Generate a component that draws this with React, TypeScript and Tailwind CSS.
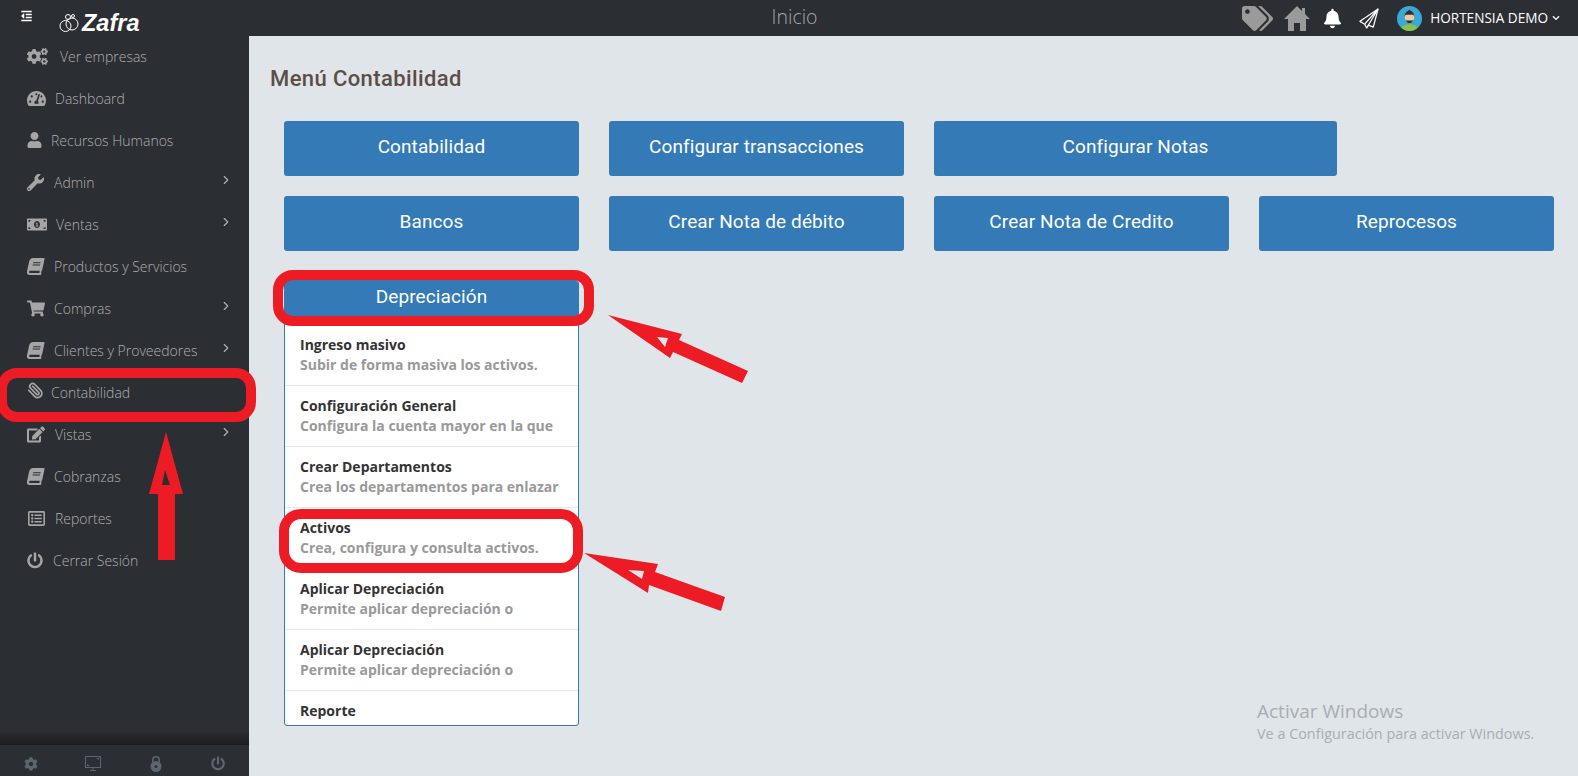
import type { ReactNode } from "react"
import {
  FaBell,
  FaBook,
  FaChevronDown,
  FaCog,
  FaCogs,
  FaEdit,
  FaMoneyBillAlt,
  FaOutdent,
  FaPowerOff,
  FaRegListAlt,
  FaShoppingCart,
  FaTachometerAlt,
  FaTags,
  FaUser,
  FaWrench,
} from "react-icons/fa"
import { FiChevronRight } from "react-icons/fi"
import { Paperclip } from "lucide-react"

type NavItem = { label: string; icon: ReactNode; box: string; arrow?: boolean }

const navItems: NavItem[] = [
  { label: "Ver empresas", icon: <FaCogs className="w-[21px] h-[21px]" />, box: "w-[33px]" },
  { label: "Dashboard", icon: <FaTachometerAlt className="w-[19px] h-[19px]" />, box: "w-[28px]" },
  { label: "Recursos Humanos", icon: <FaUser className="w-[15px] h-[16px]" />, box: "w-[24px]" },
  { label: "Admin", icon: <FaWrench className="w-[17px] h-[17px]" />, box: "w-[27px]", arrow: true },
  { label: "Ventas", icon: <FaMoneyBillAlt className="w-[20px] h-[17px]" />, box: "w-[29px]", arrow: true },
  { label: "Productos y Servicios", icon: <FaBook className="w-[17px] h-[17px] -skew-x-12" />, box: "w-[27px]" },
  { label: "Compras", icon: <FaShoppingCart className="w-[18px] h-[17px]" />, box: "w-[27px]", arrow: true },
  { label: "Clientes y Proveedores", icon: <FaBook className="w-[17px] h-[17px] -skew-x-12" />, box: "w-[27px]", arrow: true },
  { label: "Contabilidad", icon: <Paperclip className="w-[17px] h-[17px] -scale-x-100 -mt-[3px]" strokeWidth={2.4} />, box: "w-[24px]" },
  { label: "Vistas", icon: <FaEdit className="w-[18px] h-[17px]" />, box: "w-[28px]", arrow: true },
  { label: "Cobranzas", icon: <FaBook className="w-[17px] h-[17px] -skew-x-12" />, box: "w-[27px]" },
  { label: "Reportes", icon: <FaRegListAlt className="w-[19px] h-[17px]" />, box: "w-[28px]" },
  { label: "Cerrar Sesión", icon: <FaPowerOff className="w-[16px] h-[17px]" />, box: "w-[26px]" },
]

const depreciacion = [
  { title: "Ingreso masivo", text: "Subir de forma masiva los activos." },
  { title: "Configuración General", text: "Configura la cuenta mayor en la que" },
  { title: "Crear Departamentos", text: "Crea los departamentos para enlazar" },
  { title: "Activos", text: "Crea, configura y consulta activos." },
  { title: "Aplicar Depreciación", text: "Permite aplicar depreciación o" },
  { title: "Aplicar Depreciación", text: "Permite aplicar depreciación o" },
  { title: "Reporte", text: "" },
]

function MenuButton({ label, wide }: { label: string; wide?: boolean }) {
  return (
    <button className={`h-[55px] pb-[2px] ${wide ? "w-[403px]" : "w-[295px]"} rounded-[3px] bg-[#337ab7] text-white text-[19px] tracking-[0.1px] font-['Roboto',sans-serif]`}>
      {label}
    </button>
  )
}

function Avatar() {
  return (
    <svg viewBox="0 0 26 26" className="w-[25px] h-[25px]">
      <clipPath id="av"><circle cx="13" cy="13" r="13" /></clipPath>
      <g clipPath="url(#av)">
        <rect width="26" height="26" fill="#3aa9d8" />
        <path d="M4 26c0-5 4-7 9-7s9 2 9 7z" fill="#8bc34a" />
        <circle cx="13" cy="12" r="5" fill="#f2c9a1" />
        <path d="M8 11c0-4 2-5 5-7 3 2 5 3 5 7l-1-2H9z" fill="#333" />
        <path d="M9 14c1 5 7 5 8 0l-1 1h-6z" fill="#333" />
      </g>
    </svg>
  )
}

function HomeIcon() {
  return (
    <svg viewBox="0 0 26 25" className="ml-[11px] w-[26px] h-[25px] text-[#9a9a9a]" fill="currentColor">
      <path d="M13 0L0 13h4v12h6v-8h6v8h6V13h4l-5-5V2h-3v3z" />
    </svg>
  )
}

function PlaneIcon() {
  return (
    <svg viewBox="0 0 21 22" className="ml-[18px] w-[20px] h-[21px] text-white" fill="none" stroke="currentColor" strokeWidth="1.300" strokeLinejoin="round">
      <path d="M20 1L1 14l5 3 2 4 2-3 5 2z" />
      <path d="M20 1L6 17M20 1L8 21" />
    </svg>
  )
}

function Logo() {
  return (
    <div className="flex items-center">
      <svg viewBox="0 0 20 20" className="w-[20px] h-[20px] text-white" fill="none" stroke="currentColor" strokeWidth="1">
        <circle cx="6.500" cy="13" r="5.500" />
        <circle cx="13" cy="11" r="6" />
        <circle cx="9" cy="4" r="2.500" />
        <circle cx="14" cy="3" r="1.500" />
      </svg>
      <span className="ml-[3px] text-white text-[23.5px] leading-[24px] font-bold italic font-['Liberation_Sans',sans-serif]">Zafra</span>
    </div>
  )
}

// annotation shapes drawn on top of the screenshot
function Annotations() {
  return (
    <div className="absolute inset-0 pointer-events-none">
      <div className="absolute left-[-3px] top-[368px] w-[259px] h-[54px] rounded-[20px] border-[10px] border-[#ed1c24]" />
      <div className="absolute left-[273px] top-[270px] w-[321px] h-[56px] rounded-[20px] border-[10px] border-[#ed1c24]" />
      <div className="absolute left-[279px] top-[509px] w-[304px] h-[64px] rounded-[22px] border-[10px] border-[#ed1c24]" />
      <svg className="absolute inset-0 w-full h-full" viewBox="0 0 1578 776">
        <path fill="#ed1c24" fillRule="evenodd" d="M166 432L149 494H158V560H175V494H183ZM165 470L162 485H170Z" />
        <path fill="#ed1c24" fillRule="evenodd" d="M608 315L682 334L679 340L748 371L742 383L673 352L670 358ZM657 337L668 338L665 347Z" />
        <path fill="#ed1c24" fillRule="evenodd" d="M584 553L658 564L655 572L725 597L721 611L649 585L648 593ZM628 570L644 571L642 579Z" />
      </svg>
    </div>
  )
}

export default function App() {
  return (
    <div className="relative h-screen w-full overflow-hidden flex flex-col bg-[#e0e5e9] font-['Open_Sans',sans-serif]">
      {/* Top bar */}
      <header className="h-9 shrink-0 bg-[#2b2e33] flex items-center">
        <div className="w-[249px] shrink-0 flex items-center pl-[19px]">
          <FaOutdent className="w-[15px] h-[12px] text-white mb-[5px]" />
          <div className="ml-[25px] mt-[9px]">
            <Logo />
          </div>
        </div>
        <div className="flex-1 pl-[98px] pb-[3px] text-center text-[19.5px] font-light text-[#a3a6a9]">Inicio</div>
        <div className="flex items-center pr-[18px]">
          <FaTags className="w-[31px] h-[25px] text-[#9a9a9a]" />
          <HomeIcon />
          <FaBell className="ml-[14px] w-[17px] h-[21px] text-white" />
          <PlaneIcon />
          <div className="ml-[18px]"><Avatar /></div>
          <span className="ml-[8px] text-[13.6px] text-white">HORTENSIA DEMO</span>
          <FaChevronDown className="ml-[4px] w-[8px] h-[8px] text-white" />
        </div>
      </header>

      <div className="flex-1 flex min-h-0">
        {/* Sidebar */}
        <aside className="w-[249px] shrink-0 bg-[#2b2e33] flex flex-col">
          <nav className="flex-1 -mt-px pl-[27px] pr-[16px]">
            {navItems.map((item) => (
              <div key={item.label} className="h-[42px] flex items-center text-[14px] font-light text-[#b0b0b0]">
                <span className={`${item.box} shrink-0 text-[#a5a5a5]`}>{item.icon}</span>
                <span className="flex-1">{item.label}</span>
                {item.arrow && <FiChevronRight className="w-[14px] h-[14px] mb-[4px]" />}
              </div>
            ))}
          </nav>
          <div className="h-[15px] bg-gradient-to-b from-[#2b2e33] to-[#1b1c1f]" />
          <div className="h-[31px] pt-[6px] grid grid-cols-4 items-center justify-items-center text-[#5c6672]">
            <FaCog className="w-[14px] h-[14px]" />
            <svg viewBox="0 0 16 15" className="w-[16px] h-[15px]" fill="none" stroke="currentColor">
              <rect x="0.5" y="0.5" width="15" height="11" />
              <path d="M5 14.5h6M8 12v2" />
              <path d="M2 8l3 2H2zM14 4l-3-2h3z" fill="currentColor" stroke="none" />
            </svg>
            <svg viewBox="0 0 12 16" className="w-[12px] h-[16px]" fill="currentColor">
              <path d="M2 6V4a4 4 0 0 1 8 0v2H8.500V4a2.500 2.500 0 0 0-5 0v2z" />
              <circle cx="6" cy="10.500" r="5.500" />
              <circle cx="6" cy="10.500" r="1.500" fill="#2b2e33" />
            </svg>
            <FaPowerOff className="w-[14px] h-[15px]" />
          </div>
        </aside>

        {/* Main content */}
        <main className="flex-1 pl-[21px]">
          <h1 className="mt-[27px] text-[22px] leading-[32px] font-medium text-[#5a4e46] font-['Roboto',sans-serif] tracking-[0.4px]">Menú Contabilidad</h1>
          <div className="mt-[26px] ml-[14px] flex flex-col gap-5">
            <div className="flex gap-[30px]">
              <MenuButton label="Contabilidad" />
              <MenuButton label="Configurar transacciones" />
              <MenuButton label="Configurar Notas" wide />
            </div>
            <div className="flex gap-[30px]">
              <MenuButton label="Bancos" />
              <MenuButton label="Crear Nota de débito" />
              <MenuButton label="Crear Nota de Credito" />
              <MenuButton label="Reprocesos" />
            </div>
            <div className="mt-[9px] w-[295px] h-[446px] flex flex-col rounded-[3px] overflow-hidden border border-[#337ab7] bg-white">
              <div className="h-[36px] pb-[3px] shrink-0 bg-[#337ab7] text-white text-[19px] tracking-[0.1px] flex items-center justify-center font-['Roboto',sans-serif]">
                Depreciación
              </div>
              <div className="flex-1 overflow-hidden pt-[8px]">
                {depreciacion.map((row, i) => (
                  <div key={i} className="h-[61px] shrink-0 border-b border-[#e8e8e8] px-[15px] pt-[10px]">
                    <div className="text-[14px] leading-[20px] font-bold text-[#333]">{row.title}</div>
                    <div className="text-[14px] leading-[20px] font-bold whitespace-nowrap text-[#999]">{row.text}</div>
                  </div>
                ))}
              </div>
            </div>
          </div>
        </main>
      </div>

      {/* Windows activation watermark */}
      <div className="absolute left-[1257px] top-[698px] text-[#a9adb1]">
        <div className="text-[19px] leading-[26px]">Activar Windows</div>
        <div className="text-[14.4px] leading-[20px]">Ve a Configuración para activar Windows.</div>
      </div>

      <Annotations />
    </div>
  )
}
